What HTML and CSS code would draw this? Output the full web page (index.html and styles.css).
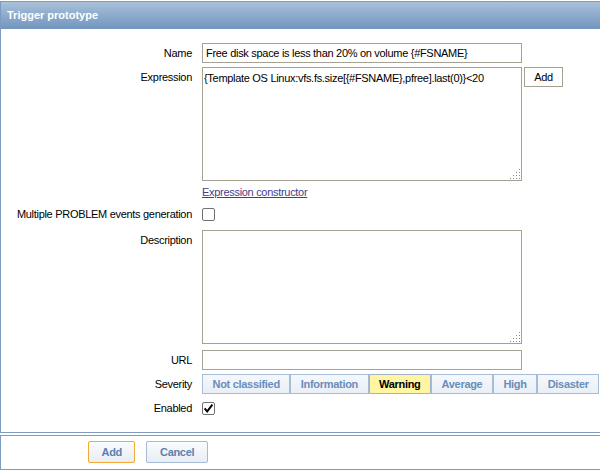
FILE: index.html
```html
<!DOCTYPE html>
<html lang="en">
<head>
<meta charset="utf-8">
<title>Trigger prototype</title>
<link rel="stylesheet" href="styles.css">
</head>
<body>
<div class="box main">
  <div class="box-head">Trigger prototype</div>
  <form class="form">
    <div class="row">
      <label class="lbl">Name</label>
      <input class="text" type="text" value="Free disk space is less than 20% on volume {#FSNAME}">
    </div>
    <div class="row">
      <label class="lbl">Expression</label>
      <div class="expr-field">
        <div class="ta-wrap">
          <textarea class="ta">{Template OS Linux:vfs.fs.size[{#FSNAME},pfree].last(0)}&lt;20</textarea>
          <svg class="grip" viewBox="0 0 10 10" width="10" height="10"><rect x="9" y="0" width="1" height="1"/><rect x="6" y="3" width="1" height="1"/><rect x="9" y="3" width="1" height="1"/><rect x="3" y="6" width="1" height="1"/><rect x="6" y="6" width="1" height="1"/><rect x="9" y="6" width="1" height="1"/><rect x="0" y="9" width="1" height="1"/><rect x="3" y="9" width="1" height="1"/><rect x="6" y="9" width="1" height="1"/><rect x="9" y="9" width="1" height="1"/></svg>
        </div>
        <button type="button" class="btn-plain">Add</button>
      </div>
    </div>
    <div class="row row-link">
      <span class="lbl"></span>
      <a class="link" href="#">Expression constructor</a>
    </div>
    <div class="row row-cb">
      <label class="lbl">Multiple PROBLEM events generation</label>
      <span class="cb"></span>
    </div>
    <div class="row row-desc">
      <label class="lbl">Description</label>
      <div class="ta-wrap">
        <textarea class="ta"></textarea>
        <svg class="grip" viewBox="0 0 10 10" width="10" height="10"><rect x="9" y="0" width="1" height="1"/><rect x="6" y="3" width="1" height="1"/><rect x="9" y="3" width="1" height="1"/><rect x="3" y="6" width="1" height="1"/><rect x="6" y="6" width="1" height="1"/><rect x="9" y="6" width="1" height="1"/><rect x="0" y="9" width="1" height="1"/><rect x="3" y="9" width="1" height="1"/><rect x="6" y="9" width="1" height="1"/><rect x="9" y="9" width="1" height="1"/></svg>
      </div>
    </div>
    <div class="row">
      <label class="lbl">URL</label>
      <input class="text" type="text" value="">
    </div>
    <div class="row">
      <label class="lbl">Severity</label>
      <div class="sev">
        <span class="sev-btn">Not classified</span>
        <span class="sev-btn">Information</span>
        <span class="sev-btn on">Warning</span>
        <span class="sev-btn">Average</span>
        <span class="sev-btn">High</span>
        <span class="sev-btn">Disaster</span>
      </div>
    </div>
    <div class="row row-en">
      <label class="lbl">Enabled</label>
      <span class="cb checked"><svg viewBox="0 0 13 13" width="13" height="13"><path d="M2.6 6.4 L5.2 9.4 L10.4 2.6" fill="none" stroke="#000" stroke-width="1.9"/></svg></span>
    </div>
  </form>
</div>
<div class="box foot">
  <button type="button" class="btn btn-add">Add</button>
  <button type="button" class="btn btn-cancel">Cancel</button>
</div>
</body>
</html>
```
FILE: styles.css
```css
html, body {
  margin: 0;
  background: #fff;
}
body {
  padding-top: 1px;
  font-family: "Liberation Sans", Arial, sans-serif;
  font-size: 11px;
  letter-spacing: -0.3px;
  color: #000;
  overflow: hidden;
}
.box {
  border: 1px solid #7b9bc1;
  border-right: 0;
}
.box-head {
  height: 27px;
  line-height: 27px;
  padding-left: 6px;
  background: linear-gradient(#a9c0d8, #7295bf);
  color: #fff;
  font-weight: bold;
  letter-spacing: 0;
}
.form {
  margin: 0;
  padding: 14px 0 13px;
  display: flex;
  flex-direction: column;
  gap: 4px;
}
.row {
  display: flex;
  align-items: flex-start;
}
.lbl {
  flex: none;
  width: 191px;
  margin-right: 10px;
  text-align: right;
  line-height: 20px;
}
.text {
  box-sizing: border-box;
  width: 320px;
  height: 20px;
  margin: 0;
  padding: 0 3px;
  border: 1px solid #a6a293;
  background: #fff;
  color: #000;
  font: inherit;
  letter-spacing: inherit;
  outline: none;
}
.expr-field {
  display: flex;
  align-items: flex-start;
  gap: 2px;
}
.ta-wrap {
  position: relative;
  width: 320px;
  height: 114px;
}
.ta {
  display: block;
  box-sizing: border-box;
  width: 320px;
  height: 114px;
  margin: 0;
  padding: 3px 1px;
  border: 1px solid #a6a293;
  background: #fff;
  color: #000;
  font: inherit;
  line-height: 15px;
  letter-spacing: inherit;
  resize: none;
  outline: none;
}
.grip {
  position: absolute;
  right: 2px;
  bottom: 2px;
  fill: #8a8a8a;
}
.btn-plain {
  box-sizing: border-box;
  width: 39px;
  height: 20px;
  margin: 0;
  padding: 0;
  border: 1px solid #a6a293;
  background: #fff;
  color: #000;
  font: inherit;
  letter-spacing: inherit;
}
.row-link {
  line-height: 14px;
}
.row-link .lbl {
  line-height: 14px;
}
.link {
  color: #443d8c;
  text-decoration: underline;
}
.row-cb .lbl {
  line-height: 23px;
}
.row-cb {
  height: 23px;
}
.cb {
  box-sizing: border-box;
  display: block;
  width: 13px;
  height: 13px;
  margin-top: 5px;
  border: 1px solid #727272;
  border-radius: 2px;
  background: #fff;
  position: relative;
}
.cb svg {
  position: absolute;
  left: -1px;
  top: -1px;
}
.row-desc {
  margin-bottom: 2px;
}
.sev {
  display: flex;
}
.sev-btn {
  box-sizing: border-box;
  height: 20px;
  line-height: 18px;
  padding: 0 9.5px;
  border: 1px solid #a7bcd7;
  background: linear-gradient(#f5f8fb, #e9eff6);
  color: #6a8dba;
  font-weight: bold;
  white-space: nowrap;
}
.sev-btn.on {
  background: #fff5a3;
  border-color: #a2b3c9;
  color: #000;
}
.row-en {
  height: 21px;
}
.row-en .lbl {
  line-height: 21px;
}
.row-en .cb {
  margin-top: 4px;
}
.foot {
  margin-top: 2px;
  padding: 5px 0 6px 87px;
  display: flex;
  gap: 11px;
}
.btn {
  box-sizing: border-box;
  height: 22px;
  margin: 0;
  padding: 0 12.5px;
  border: 1px solid #a5bad5;
  border-radius: 2px;
  background: linear-gradient(#fafcfd, #e8eef5);
  color: #5b80af;
  font: inherit;
  font-weight: bold;
  letter-spacing: inherit;
}
.btn-add {
  border-color: #f5a833;
}
```
